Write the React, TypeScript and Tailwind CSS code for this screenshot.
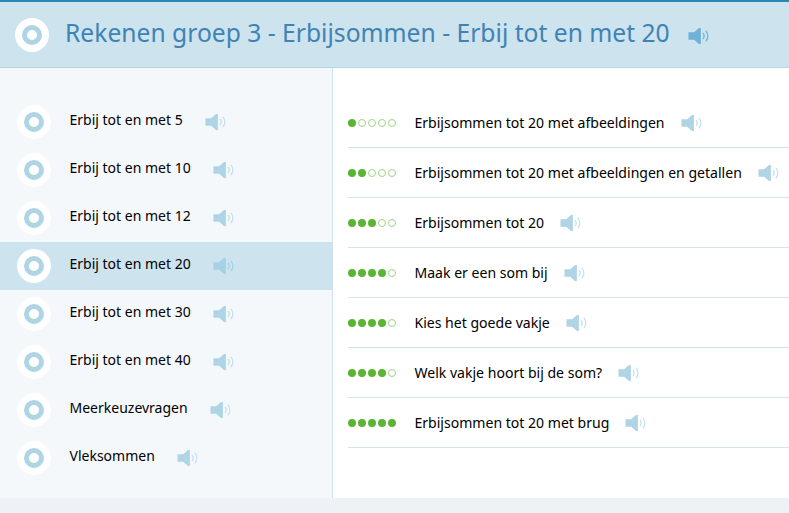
const groups = [
    {title: "Erbij tot en met 5"},
    {title: "Erbij tot en met 10"},
    {title: "Erbij tot en met 12"},
    {title: "Erbij tot en met 20", active: true},
    {title: "Erbij tot en met 30"},
    {title: "Erbij tot en met 40"},
    {title: "Meerkeuzevragen"},
    {title: "Vleksommen"},
];

const exercises = [
    {title: "Erbijsommen tot 20 met afbeeldingen", level: 1},
    {title: "Erbijsommen tot 20 met afbeeldingen en getallen", level: 2},
    {title: "Erbijsommen tot 20", level: 3},
    {title: "Maak er een som bij", level: 4},
    {title: "Kies het goede vakje", level: 4},
    {title: "Welk vakje hoort bij de som?", level: 4},
    {title: "Erbijsommen tot 20 met brug", level: 5},
];

function Speaker({color, waves, className}: { color: string; waves: string; className?: string }) {
    return (
        <svg viewBox="0 0 22 18" className={`h-[18px] w-[21px] shrink-0 ${className ?? ""}`} fill="none">
            <path d="M0.5 5h6L11.500 0.500h2v17h-2L6.500 13h-6z" fill={color}/>
            <path d="M16 6.200c1.100 1.700 1.100 3.900 0 5.600M19 3.800c2.100 3 2.100 7.400 0 10.400" stroke={waves} strokeWidth="1.300" strokeLinecap="round"/>
        </svg>
    );
}

function Target() {
    return (
        <div className="flex h-[34px] w-[34px] shrink-0 items-center justify-center rounded-full bg-white">
            <div className="h-5 w-5 rounded-full border-[5px] border-[#afd4e5] bg-white"/>
        </div>
    );
}

function Level({level}: { level: number }) {
    return (
        <div className="flex w-[49px] shrink-0 gap-[2px]">
            {[1, 2, 3, 4, 5].map((n) => (
                <span
                    key={n}
                    className={n <= level
                        ? "h-2 w-2 rounded-full bg-[#5bb535]"
                        : "h-2 w-2 rounded-full border border-[#9ed28a] bg-white"}
                />
            ))}
        </div>
    );
}

export default function App() {
    return (
        <div className="flex h-[513px] w-[789px] flex-col overflow-hidden bg-[#eef2f6] font-['Noto_Sans',sans-serif] text-[14px] text-black">
            <header className="flex h-[68px] shrink-0 items-center border-t-2 border-b border-t-[#2a86b5] border-b-[#b5d5e6] bg-[#cde3ee] pl-[15px]">
                <Target/>
                <h1 className="ml-[16px] pb-[3px] text-[24.65px] text-[#3f83b5]">
                    Rekenen groep 3 - Erbijsommen - Erbij tot en met 20
                </h1>
                <Speaker color="#6db3d8" waves="#6db3d8" className="mt-[3px] ml-[18px]"/>
            </header>

            <div className="flex h-[430px] shrink-0">
                <aside className="w-[333px] shrink-0 border-r border-[#cde3ee] bg-[#f4f8fb] pt-[30px]">
                    {groups.map((group) => (
                        <div
                            key={group.title}
                            className={`flex h-12 items-center pl-[17px] ${group.active ? "bg-[#cde3ee]" : ""}`}
                        >
                            <Target/>
                            <span className="ml-[18.5px] pb-[6px]">{group.title}</span>
                            <Speaker
                                color={group.active ? "#a6d0e6" : "#afd4e5"}
                                waves={group.active ? "#a6d0e6" : "#c5e0ee"}
                                className="ml-[22px]"
                            />
                        </div>
                    ))}
                </aside>

                <main className="flex-1 bg-white pt-[30px] pl-[15px]">
                    {exercises.map((exercise) => (
                        <div
                            key={exercise.title}
                            className="flex h-[50px] items-center border-b border-[#d5e5ef]"
                        >
                            <Level level={exercise.level}/>
                            <span className="ml-[17.5px] text-[14.05px]">{exercise.title}</span>
                            <Speaker color="#afd4e5" waves="#c5e0ee" className="ml-[16px]"/>
                        </div>
                    ))}
                </main>
            </div>
        </div>
    );
}
